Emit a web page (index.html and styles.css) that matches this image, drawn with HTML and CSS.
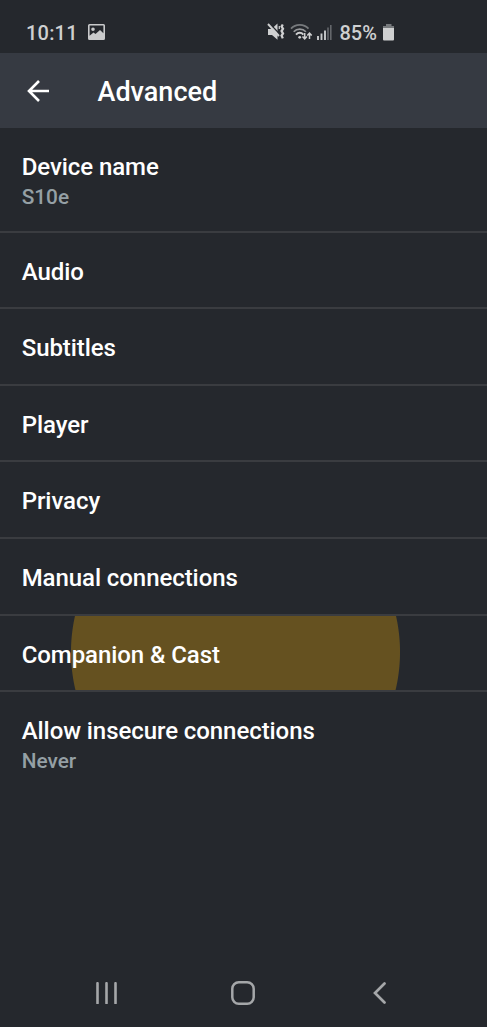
FILE: index.html
```html
<!DOCTYPE html>
<html lang="en">
<head>
<meta charset="utf-8">
<title>Advanced</title>
<link rel="stylesheet" href="styles.css">
</head>
<body>
<div class="status">
  <span class="time">10:11</span>
  <svg class="picture" width="17" height="16" viewBox="0 0 17 16"><path fill="#c9cacb" fill-rule="evenodd" d="M1.500 0h14a1.500 1.500 0 0 1 1.500 1.500v13a1.500 1.500 0 0 1-1.500 1.500h-14A1.500 1.500 0 0 1 0 14.500v-13A1.500 1.500 0 0 1 1.500 0zM1.600 1.600v10.200L5.500 8.400l2 1.700L12 6l3.400 3.300V1.600zM5 3.500a1.800 1.800 0 1 1 0 3.600a1.800 1.800 0 0 1 0-3.600z"/></svg>
  <svg class="indicators" width="66" height="20" viewBox="0 0 66 20">
    <path d="M1 7h3.500L10.500 1.500v16.300L5 13H1z" fill="#cfd0d1"/>
    <path d="M2.500 1.500L12.500 12" stroke="#25282d" stroke-width="1.600"/>
    <path d="M1 2L12 14" stroke="#cfd0d1" stroke-width="1.900"/>
    <path d="M15.800 2.500l-1.200 2 1.400 2.300-1.400 2.300 1.400 2.300-1.400 2.300 1.200 2.700" fill="none" stroke="#cfd0d1" stroke-width="2.300"/>
    <path d="M12.300 4v3" stroke="#cfd0d1" stroke-width="1.200"/>
    <path d="M24 6.600C28.500 1.500 37 1.500 41.500 6.600" fill="none" stroke="#777a7d" stroke-width="1.700"/>
    <path d="M26.700 9.800c3.300-3.700 8.900-3.700 12.200 0" fill="none" stroke="#96989a" stroke-width="1.700"/>
    <path d="M29 12.600c2.200-2.400 5.200-2.400 7.400 0" fill="none" stroke="#cfd0d1" stroke-width="2"/>
    <circle cx="32.700" cy="15.300" r="1.400" fill="#cfd0d1"/>
    <path d="M37.700 11v6M35.500 14.500l2.200 2.300 2.200-2.300M42.500 17v-6M40.300 13.500l2.200-2.300 2.200 2.300" fill="none" stroke="#cfd0d1" stroke-width="1.500"/>
    <path d="M51 14v4M54.500 11.500V18M58 8.500V18" stroke="#c8cacb" stroke-width="1.900"/>
    <path d="M61 5.500V18M63.800 3v15" stroke="#64676b" stroke-width="1.600"/>
  </svg>
  <span class="percent">85%</span>
  <svg class="battery" width="12" height="17" viewBox="0 0 12 17"><path d="M3 0h5.500v2H11v3H0V2h3z" fill="#76797c"/><path d="M0 4h11v11.500q0 1-1 1H1q-1 0-1-1z" fill="#cfd0d1"/></svg>
</div>
<header class="toolbar">
  <svg width="23" height="22" viewBox="0 0 23 22"><path d="M22 11H2M12 1L2 11l10 10" fill="none" stroke="#fff" stroke-width="2.600"/></svg>
  <h1 class="title">Advanced</h1>
</header>
<main class="list">
  <div class="row tall"><div class="label">Device name</div><div class="value">S10e</div></div>
  <div class="row"><div class="label">Audio</div></div>
  <div class="row"><div class="label">Subtitles</div></div>
  <div class="row"><div class="label">Player</div></div>
  <div class="row"><div class="label">Privacy</div></div>
  <div class="row"><div class="label">Manual connections</div></div>
  <div class="row pressed"><div class="label">Companion &amp; Cast</div></div>
  <div class="row tall last"><div class="label">Allow insecure connections</div><div class="value">Never</div></div>
</main>
<nav class="nav">
  <svg width="22" height="22" viewBox="0 0 22 22"><path d="M1.500 1.200v20M10.500 1.200v20M19.500 1.200v20" stroke="#a5a7a9" stroke-width="2.600" stroke-linecap="round"/></svg>
  <svg class="home" width="24" height="24" viewBox="0 0 24 24"><rect x="1.300" y="1.300" width="21.400" height="21.400" rx="6.500" fill="none" stroke="#a5a7a9" stroke-width="2.500"/></svg>
  <svg width="13" height="22" viewBox="0 0 13 22"><path d="M11.500 1.500L2 11l9.500 9.500" fill="none" stroke="#a5a7a9" stroke-width="2.700" stroke-linecap="round"/></svg>
</nav>
</body>
</html>
```

FILE: styles.css
```css
* { box-sizing: border-box; }
body {
  margin: 0;
  height: 1027px;
  display: flex;
  flex-direction: column;
  background: #25282d;
  color: #fff;
  font-family: Roboto, sans-serif;
  font-weight: 500;
  overflow: hidden;
}
svg { display: block; flex: none; }
.status {
  height: 53px;
  padding: 13px 0 0 26px;
  display: flex;
  align-items: center;
  color: #cfd0d1;
  font-size: 20px;
  line-height: 40px;
}
.time { width: 62px; letter-spacing: .2px; }
.picture { margin-top: -2px; }
.indicators { margin: -2px 0 0 162px; }
.percent { width: 50px; padding-left: 6.500px; }
.battery { margin-top: -2px; }
.toolbar {
  height: 75px;
  padding-left: 26.600px;
  display: flex;
  align-items: center;
  gap: 47.900px;
  background: #363a42;
}
.title { margin: 0; font-size: 27px; font-weight: 500; line-height: 32px; padding-top: 2px; }
.list { flex: 1; }
.row {
  height: 76.6px;
  padding: 24px 22px 0 21.700px;
  border-bottom: 2px solid #3a3c40;
  overflow: hidden;
}
.tall { height: 104.600px; }
.last { border-bottom: 0; }
.label { font-size: 24px; line-height: 30px; letter-spacing: -.07px; }
.value { font-size: 20.800px; line-height: 30px; color: #95a0a5; }
.pressed { background: radial-gradient(circle at 235.5px 36px, #655120 164px, transparent 165px); background-clip: padding-box; }
.nav {
  height: 68px;
  padding: 0 101.500px 0 96px;
  display: flex;
  align-items: center;
  justify-content: space-between;
}
.home { margin-right: 5.500px; }
```
